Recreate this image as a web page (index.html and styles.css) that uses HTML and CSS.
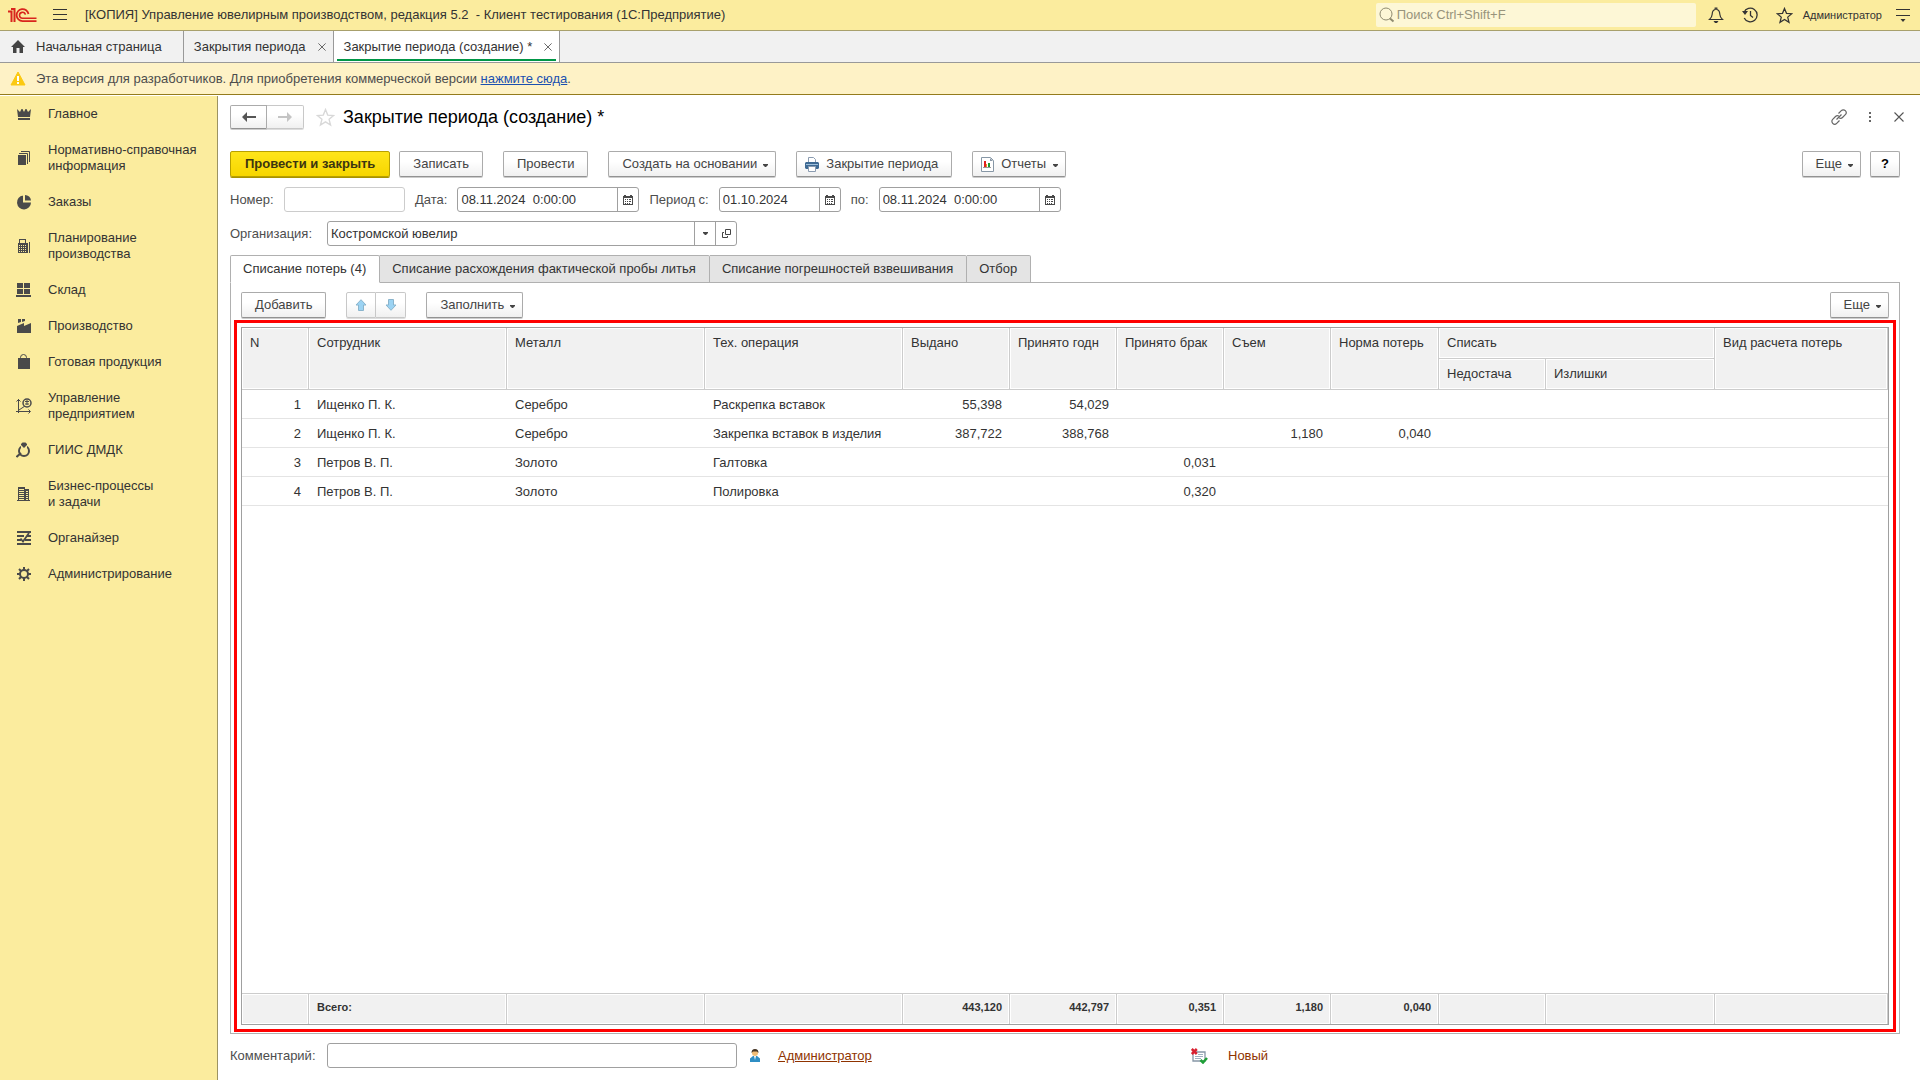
FILE: index.html
```html
<!DOCTYPE html>
<html lang="ru">
<head>
<meta charset="utf-8">
<meta name="viewport" content="width=device-width, initial-scale=1">
<title>Закрытие периода (создание) *</title>
<link rel="stylesheet" href="styles.css">
</head>
<body>
<svg class="defs" aria-hidden="true">
  <symbol id="calendar" viewBox="0 0 10 10"><path fill="#4a4a4a" d="M0 1h1V0h2v1h4V0h2v1h1v9H0z"/><path fill="#fff" d="M1 3h8v6H1z"/><path fill="#4a4a4a" d="M2 4h1v1H2zM4 4h1v1H4zM6 4h2v1H6zM2 6h1v1H2zM4 6h1v1H4zM6 6h2v1H6zM2 8h1v1H2zM4 8h1v1H4zM6 8h1v1H6z"/></symbol>
  <symbol id="caret" viewBox="0 0 5 3"><path fill="#444" d="M0 0h5v1L3 3H2L0 1z"/></symbol>
  <symbol id="star" viewBox="0 0 18 18"><path fill="none" stroke="currentColor" stroke-width="1.3" d="M9 1.500l2.100 5.200 5.600.4-4.300 3.600 1.400 5.500L9 13.200l-4.800 3 1.400-5.500L1.300 7.100l5.600-.4z"/></symbol>
  <symbol id="cross" viewBox="0 0 10 10"><path fill="none" stroke="currentColor" stroke-width="1.1" d="M.5.5l9 9M9.500.5l-9 9"/></symbol>
</svg>

<header class="topbar">
  <svg class="logo" width="30" height="15" viewBox="0 0 30 15" fill="none" stroke="#d9251d"><path stroke-width="2" d="M1 3.500h3.500V14M4 1h3.500v13"/><path stroke-width="1.800" d="M21.500 6a6 6 0 1 0-6 7.100H29.500"/><path stroke-width="1.600" d="M18.400 6.600a3 3 0 1 0-2.900 3.700H29.500"/></svg>
  <button class="icon-btn menu" aria-label="Меню"><svg width="14" height="12" viewBox="0 0 14 12"><path stroke="#333" d="M0 .5h14M0 5.500h14M0 10.500h14"/></svg></button>
  <span class="app-title">[КОПИЯ] Управление ювелирным производством, редакция 5.2 &nbsp;- Клиент тестирования (1С:Предприятие)</span>
  <label class="search"><svg width="16" height="16" viewBox="0 0 16 16" fill="none" stroke="#8f8b70"><circle cx="7" cy="7" r="6"/><path stroke-width="2" d="M11 11.500l3.500 3"/></svg><input type="search" placeholder="Поиск Ctrl+Shift+F" aria-label="Поиск"></label>
  <div class="top-actions">
    <button class="icon-btn" aria-label="Уведомления"><svg width="16" height="16" viewBox="0 0 16 16"><path fill="none" stroke="#333" stroke-width="1.200" d="M1.500 12.500h13c-2.500-2-2.500-3-2.700-5.500C11.600 4 10.500 2.800 8.800 2.500V1H7.200v1.500C5.500 2.800 4.400 4 4.200 7 4 9.500 4 10.500 1.500 12.500z"/><path fill="#333" d="M5.500 14h5L9 16H7z"/></svg></button>
    <button class="icon-btn" aria-label="История"><svg width="16" height="16" viewBox="0 0 16 16" fill="none" stroke="#333" stroke-width="1.300"><path d="M2 5.500a6.800 6.800 0 1 1 .2 5.500M8.500 4v4.500l2.500 2"/><path fill="#333" stroke="none" d="M0 4h6L3 8z"/></svg></button>
    <button class="icon-btn dark" aria-label="Избранное"><svg width="17" height="17"><use href="#star"/></svg></button>
    <a class="user" href="#user">Администратор</a>
    <button class="icon-btn" aria-label="Сервис"><svg width="14" height="13" viewBox="0 0 14 13"><path stroke="#333" d="M0 .5h14M0 6.500h14"/><path fill="#333" d="M4.500 10h5L7 13z"/></svg></button>
  </div>
</header>

<nav class="window-tabs" aria-label="Открытые окна">
  <a class="window-tab home" href="#home"><svg width="16" height="13" viewBox="0 0 16 13"><path fill="#444" d="M8 0l7 7h-2v6H9.500V8h-3v5H3V7H1z"/></svg>Начальная страница</a>
  <span class="window-tab"><a href="#list">Закрытия периода</a><button class="icon-btn" aria-label="Закрыть"><svg width="8" height="8"><use href="#cross"/></svg></button></span>
  <span class="window-tab current"><a href="#new">Закрытие периода (создание) *</a><button class="icon-btn" aria-label="Закрыть"><svg width="8" height="8"><use href="#cross"/></svg></button></span>
</nav>

<div class="banner">
  <svg width="16" height="15" viewBox="0 0 16 15"><path fill="#fbc912" stroke="#fbc912" stroke-linejoin="round" d="M8 1l7 13H1z"/><path fill="#fff" d="M7 5h2v5H7zM7 11h2v2H7z"/></svg>
  <span>Эта версия для разработчиков. Для приобретения коммерческой версии <a href="#buy">нажмите сюда</a>.</span>
</div>

<div class="workspace">
  <nav class="sidebar" aria-label="Разделы">
    <a href="#main"><svg width="16" height="16" viewBox="0 0 16 16"><path fill="#4a4a4a" d="M1 3l3 3 1.500-3h1L8 6l1.500-3h1L12 6l3-3-1 8H2zM2 12h12v2H2z"/></svg>Главное</a>
    <a href="#ref"><svg width="16" height="16" viewBox="0 0 16 16"><path fill="#4a4a4a" d="M2 5h8v10H2z"/><path fill="none" stroke="#4a4a4a" d="M3 3.500h8.500V14M5 1.500h8.500V12"/></svg>Нормативно-справочная<br>информация</a>
    <a href="#orders"><svg width="16" height="16" viewBox="0 0 16 16"><path fill="#4a4a4a" d="M7 1v7.500h8A7 7 0 1 1 7 1.500zM9 1a6 6 0 0 1 6 5.500H9z"/></svg>Заказы</a>
    <a href="#plan"><svg width="16" height="16" viewBox="0 0 16 16"><path fill="#4a4a4a" d="M3 1h7v4h2v10H2V5h1zM13 4h1v11h-1z"/><path fill="#fbec9e" d="M4 2h5v3H4zM3 7h1v1H3zM5 7h1v1H5zM7 7h1v1H7zM9 7h1v1H9zM3 9h1v1H3zM5 9h1v1H5zM7 9h1v1H7zM9 9h1v1H9zM3 11h1v1H3zM5 11h1v1H5zM7 11h1v1H7zM9 11h1v1H9zM3 13h1v1H3zM5 13h1v1H5zM7 13h1v1H7zM9 13h1v1H9z"/></svg>Планирование<br>производства</a>
    <a href="#stock"><svg width="16" height="16" viewBox="0 0 16 16"><path fill="#4a4a4a" d="M1 1h6v5H1zM8 1h6v5H8zM1 7h6v5H1zM8 7h6v5H8zM0 13h15v2H0z"/></svg>Склад</a>
    <a href="#production"><svg width="16" height="16" viewBox="0 0 16 16"><path fill="#4a4a4a" d="M2 1h3v3L2 5zM6 1h3v2L6 4zM1 8l7-3v3l7-3v10H1z"/></svg>Производство</a>
    <a href="#goods"><svg width="16" height="16" viewBox="0 0 16 16"><path fill="#4a4a4a" d="M2 4h2v2h1V4h5v2h1V4h3v11H2z"/><path fill="none" stroke="#4a4a4a" d="M4.500 6V3.500q0-3 3-3t3 3V6"/></svg>Готовая продукция</a>
    <a href="#company"><svg width="16" height="16" viewBox="0 0 16 16" fill="none" stroke="#4a4a4a"><path d="M2.500 1v14M0 13.500h14M3 12l6-4M.5 3.500l2-2 2 2M12.500 11.500l2 2-2 2"/><circle cx="11" cy="5" r="4" stroke-width="1.500"/><path d="M9 3.500h4M9 6h4M11 2v5"/></svg>Управление<br>предприятием</a>
    <a href="#giis"><svg width="16" height="16" viewBox="0 0 16 16"><circle cx="8" cy="9" r="5" fill="none" stroke="#4a4a4a" stroke-width="2"/><path stroke="#4a4a4a" stroke-width="2" d="M5 11l-4.500 4"/><path fill="#fbec9e" d="M5 2h6v4L8 8 5 6z"/><path fill="#4a4a4a" d="M5 2l1.500-1.500h3L11 2v1L8 6 5 3z"/></svg>ГИИС ДМДК</a>
    <a href="#tasks"><svg width="16" height="16" viewBox="0 0 16 16"><path fill="#4a4a4a" d="M2 1h7v2h4v11h1v1H1v-1h1z"/><path stroke="#fbec9e" d="M3 3.500h5M3 5.500h5M3 7.500h5M3 9.500h5M3 11.500h5M3 13.500h5M10 5.500h2M10 7.500h2M10 9.500h2M10 11.500h2M10 13.500h2"/></svg>Бизнес-процессы<br>и задачи</a>
    <a href="#organizer"><svg width="16" height="16" viewBox="0 0 16 16" fill="none" stroke="#4a4a4a" stroke-width="2"><path d="M1 2h14M1 6h7M11 6h4M1 10h4M9 10h6M1 14h14"/><path stroke-width="1.800" d="M4.500 8.500L7 11.500 13 3"/></svg>Органайзер</a>
    <a href="#admin"><svg width="16" height="16" viewBox="0 0 16 16" fill="none" stroke="#4a4a4a" stroke-width="2"><circle cx="8" cy="8" r="4"/><path d="M8 1v3M8 12v3M1 8h3M12 8h3M3 3l2 2M11 11l2 2M13 3l-2 2M3 13l2-2"/></svg>Администрирование</a>
  </nav>

  <main class="form">
    <div class="form-head">
      <div class="btn-pair">
        <button class="btn" aria-label="Назад"><svg width="14" height="10" viewBox="0 0 14 10"><path fill="#555" d="M5 0v4h9v2H5v4L0 5z"/></svg></button>
        <button class="btn faded" aria-label="Вперед" disabled><svg width="14" height="10" viewBox="0 0 14 10"><path fill="#c4c4c4" d="M9 0v4H0v2h9v4l5-5z"/></svg></button>
      </div>
      <button class="icon-btn fav" aria-label="В избранное"><svg width="19" height="19"><use href="#star"/></svg></button>
      <h1>Закрытие периода (создание) *</h1>
      <div class="head-tools">
        <button class="icon-btn" aria-label="Ссылка"><svg width="16" height="16" viewBox="0 0 16 16" fill="none" stroke="#666" stroke-width="1.200"><path d="M7.500 4.500l2.800-2.800a2.700 2.700 0 0 1 4 4L11.500 8.500q-1.500 1.500-3.300.5M8.500 11.500l-2.800 2.800a2.700 2.700 0 0 1-4-4L4.500 7.500q1.500-1.500 3.300-.5M5.500 10.500l5-5"/></svg></button>
        <button class="icon-btn" aria-label="Еще"><svg width="3" height="11" viewBox="0 0 3 11"><path fill="#666" d="M0 0h2v2H0zM0 4h2v2H0zM0 8h2v2H0z"/></svg></button>
        <button class="icon-btn" aria-label="Закрыть"><svg width="10" height="10"><use href="#cross"/></svg></button>
      </div>
    </div>

    <div class="commands">
      <div class="cmd-group">
        <button class="btn primary">Провести и закрыть</button>
        <button class="btn">Записать</button>
      </div>
      <button class="btn">Провести</button>
      <button class="btn drop">Создать на основании<svg width="5" height="5" viewBox="0 -2 5 5"><use href="#caret" width="5" height="3"/></svg></button>
      <button class="btn with-icon"><svg width="14" height="15" viewBox="0 0 14 15"><path fill="#fff" stroke="#8a9bb0" d="M3.500 5V.500h5l2 2V5"/><path fill="#3f6a94" d="M1 5h12l1 1v5l-1 1H1l-1-1V6z"/><path fill="#9fc0dc" d="M1 7h12v1H1z"/><path fill="#fff" stroke="#8a9bb0" d="M3.500 9.500h7v5h-7z"/></svg>Закрытие периода</button>
      <button class="btn with-icon drop"><svg width="13" height="15" viewBox="0 0 13 15"><path fill="#fff" stroke="#8797a6" d="M.5.500h9l3 3v11H.500z"/><path fill="#8797a6" d="M9 1v3h3z"/><path fill="#e02020" d="M3 4h2v6H3z"/><path fill="#e0a020" d="M5 7h1v3H5z"/><path fill="#1a9a30" d="M7 6h2v4H7z"/><path fill="#999" d="M2 10h8v1H2z"/></svg>Отчеты<svg width="5" height="5" viewBox="0 -2 5 5"><use href="#caret" width="5" height="3"/></svg></button>
      <div class="cmd-group right">
        <button class="btn drop">Еще<svg width="5" height="5" viewBox="0 -2 5 5"><use href="#caret" width="5" height="3"/></svg></button>
        <button class="btn help">?</button>
      </div>
    </div>

    <div class="fields">
      <label for="number" class="col-label short">Номер:</label>
      <div class="field number"><input id="number" type="text"></div>
      <label for="date">Дата:</label>
      <div class="field datetime"><input id="date" type="text" value="08.11.2024  0:00:00"><button aria-label="Выбрать дату"><svg width="10" height="10"><use href="#calendar"/></svg></button></div>
      <label for="from">Период с:</label>
      <div class="field date"><input id="from" type="text" value="01.10.2024"><button aria-label="Выбрать начало периода"><svg width="10" height="10"><use href="#calendar"/></svg></button></div>
      <label for="to">по:</label>
      <div class="field datetime"><input id="to" type="text" value="08.11.2024  0:00:00"><button aria-label="Выбрать конец периода"><svg width="10" height="10"><use href="#calendar"/></svg></button></div>
    </div>

    <div class="fields">
      <label for="org" class="col-label">Организация:</label>
      <div class="field wide">
        <select id="org"><option>Костромской ювелир</option></select>
        <button aria-label="Выбрать из списка"><svg width="5" height="3"><use href="#caret"/></svg></button>
        <button aria-label="Открыть"><svg width="9" height="9" viewBox="0 0 9 9" fill="none" stroke="#444"><path d="M3.500.500h5v5h-5zM2 3.500H.500v5h5V7"/></svg></button>
      </div>
    </div>

    <div class="tabs" role="tablist">
      <button role="tab" aria-selected="true">Списание потерь (4)</button>
      <button role="tab">Списание расхождения фактической пробы литья</button>
      <button role="tab">Списание погрешностей взвешивания</button>
      <button role="tab">Отбор</button>
    </div>

    <section class="panel">
      <div class="panel-tools">
        <button class="btn">Добавить</button>
        <div class="btn-pair small">
          <button class="btn faded" aria-label="Вверх"><svg width="12" height="12" viewBox="0 0 12 12"><path fill="#9bd3f3" stroke="#8ab4cc" d="M6 .7L11 6H8.500v5.500h-5V6H1z"/></svg></button>
          <button class="btn faded" aria-label="Вниз"><svg width="12" height="12" viewBox="0 0 12 12"><path fill="#9bd3f3" stroke="#8ab4cc" d="M6 11.300L11 6H8.500V.500h-5V6H1z"/></svg></button>
        </div>
        <button class="btn drop">Заполнить<svg width="5" height="5" viewBox="0 -2 5 5"><use href="#caret" width="5" height="3"/></svg></button>
        <button class="btn drop right">Еще<svg width="5" height="5" viewBox="0 -2 5 5"><use href="#caret" width="5" height="3"/></svg></button>
      </div>
      <div class="highlight">
        <table class="grid">
          <colgroup><col class="c-n"><col class="c-text"><col class="c-text"><col class="c-text"><col class="c-num"><col class="c-num"><col class="c-num"><col class="c-num"><col class="c-norm"><col class="c-num"><col class="c-over"><col></colgroup>
          <thead>
            <tr><th rowspan="2">N</th><th rowspan="2">Сотрудник</th><th rowspan="2">Металл</th><th rowspan="2">Тех. операция</th><th rowspan="2">Выдано</th><th rowspan="2">Принято годн</th><th rowspan="2">Принято брак</th><th rowspan="2">Съем</th><th rowspan="2">Норма потерь</th><th colspan="2">Списать</th><th rowspan="2">Вид расчета потерь</th></tr>
            <tr><th>Недостача</th><th>Излишки</th></tr>
          </thead>
          <tbody>
            <tr><td class="num">1</td><td>Ищенко П. К.</td><td>Серебро</td><td>Раскрепка вставок</td><td class="num">55,398</td><td class="num">54,029</td><td></td><td></td><td></td><td></td><td></td><td></td></tr>
            <tr><td class="num">2</td><td>Ищенко П. К.</td><td>Серебро</td><td>Закрепка вставок в изделия</td><td class="num">387,722</td><td class="num">388,768</td><td></td><td class="num">1,180</td><td class="num">0,040</td><td></td><td></td><td></td></tr>
            <tr><td class="num">3</td><td>Петров В. П.</td><td>Золото</td><td>Галтовка</td><td></td><td></td><td class="num">0,031</td><td></td><td></td><td></td><td></td><td></td></tr>
            <tr><td class="num">4</td><td>Петров В. П.</td><td>Золото</td><td>Полировка</td><td></td><td></td><td class="num">0,320</td><td></td><td></td><td></td><td></td><td></td></tr>
            <tr class="filler"><td colspan="12"></td></tr>
          </tbody>
          <tfoot>
            <tr><td></td><td>Всего:</td><td></td><td></td><td class="num">443,120</td><td class="num">442,797</td><td class="num">0,351</td><td class="num">1,180</td><td class="num">0,040</td><td></td><td></td><td></td></tr>
          </tfoot>
        </table>
      </div>
    </section>

    <footer class="form-foot">
      <label for="comment" class="col-label">Комментарий:</label>
      <div class="field wide"><input id="comment" type="text"></div>
      <div class="author"><svg width="10" height="13" viewBox="0 0 10 13"><path fill="#2f8ec4" d="M0 13V9.500L3 7h4l3 2.500V13z"/><path fill="#fff" d="M4 7h2l-1 4z"/><circle cx="5" cy="4" r="3" fill="#f1bd76"/><path fill="#443322" d="M1.500 4q0-4 3.500-4t3.500 4L7 2.500H3z"/></svg><a href="#author">Администратор</a></div>
      <div class="state"><svg width="17" height="16" viewBox="0 0 17 16"><path fill="#fff" stroke="#8797a6" stroke-width="1.300" d="M3 4h11v9H2V6"/><path stroke="#9fb0c0" d="M7 6.500h5M4 8.500h8M4 10.500h6"/><path stroke="#d82030" stroke-width="2.500" d="M.8 1l5 5M5.800 1l-5 5"/><path fill="none" stroke="#1fa038" stroke-width="2.500" d="M9.500 12l2.500 2.500L16 10"/></svg><span>Новый</span></div>
    </footer>
  </main>
</div>
</body>
</html>
```
FILE: styles.css
```css
* { box-sizing: border-box; }

body {
  margin: 0;
  min-height: 100vh;
  display: flex;
  flex-direction: column;
  background: #fff;
  color: #333;
  font: 13px/16px "Liberation Sans", Arial, sans-serif;
}

button, input, select { font: inherit; color: inherit; }
svg { flex: none; }
.defs { display: none; }

.icon-btn {
  display: flex;
  padding: 0;
  border: 0;
  background: none;
  color: #555;
}
.icon-btn.dark { color: #333; }

/* Application header */
.topbar {
  display: flex;
  align-items: center;
  height: 31px;
  padding: 0 10px 0 7px;
  background: #fbec9e;
  border-bottom: 1px solid #a8a06c;
}
.menu { margin: 0 18px 0 16px; }
.app-title { flex: 1; white-space: nowrap; }
.search {
  display: flex;
  align-items: center;
  gap: 2px;
  width: 320px;
  height: 24px;
  margin-right: 12px;
  padding-left: 3px;
  background: #fdf7d6;
  border-radius: 2px;
}
.search input {
  flex: 1;
  min-width: 0;
  padding: 0;
  border: 0;
  outline: 0;
  background: none;
}
.search input::placeholder { color: #98947c; opacity: 1; }
.top-actions { display: flex; align-items: center; gap: 18px; }
.user {
  margin: 0 -4px 0 -8px;
  color: #333;
  font-size: 11px;
  text-decoration: none;
}

/* Open window tabs */
.window-tabs {
  display: flex;
  height: 32px;
  background: #f1f1f1;
  border-bottom: 1px solid #999;
}
.window-tab {
  display: flex;
  align-items: center;
  gap: 12px;
  padding: 0 7px 0 10px;
  border-right: 1px solid #999;
  color: #333;
}
.window-tab a { color: inherit; text-decoration: none; }
.window-tab.home { gap: 10px; padding-right: 21px; text-decoration: none; }
.window-tab.current {
  background: linear-gradient(#009646, #009646) center bottom 1px / calc(100% - 6px) 2px no-repeat #fff;
}

.banner {
  display: flex;
  align-items: center;
  gap: 10px;
  height: 32px;
  padding-left: 10px;
  background: #fef2c6;
  border-bottom: 1px solid #947b1c;
  color: #4d4d4d;
}
.banner a { color: #1a50b0; }

.workspace { flex: 1; display: flex; padding-top: 1px; }

/* Section navigation */
.sidebar {
  display: flex;
  flex-direction: column;
  gap: 20px;
  width: 218px;
  padding: 10px 0 10px 16px;
  background: #fbec9e;
  border-right: 1px solid #9c9362;
}
.sidebar a {
  display: flex;
  gap: 16px;
  align-items: center;
  color: #333;
  text-decoration: none;
}

/* Document form */
.form {
  flex: 1;
  min-width: 0;
  display: flex;
  flex-direction: column;
  padding: 9px 20px 12px 12px;
  color: #4d4d4d;
}

.btn {
  display: flex;
  align-items: center;
  justify-content: center;
  height: 26px;
  padding: 0 13px;
  border: 1px solid #ababab;
  border-bottom-color: #929292;
  border-radius: 2px;
  background: linear-gradient(#fff 40%, #f0f0f0);
  box-shadow: 0 1px 0 #ccc;
  color: #444;
  white-space: nowrap;
}
.btn.primary {
  padding: 0 14px;
  border-color: #b8a000;
  background: linear-gradient(#ffe51a, #f7d600);
  box-shadow: 0 1px 0 #a89200;
  color: #3c3510;
  font-weight: bold;
}
.btn.drop { gap: 6px; padding-right: 7px; }
.btn.with-icon { gap: 7px; padding-left: 8px; }
.btn.help { width: 30px; padding: 0; color: #000; font-weight: bold; }
.right { margin-left: auto; }

.btn-pair { display: flex; }
.btn-pair .btn { width: 37px; height: 24px; padding: 0; border-radius: 2px 0 0 2px; }
.btn-pair .btn + .btn { border-left: 0; border-radius: 0 2px 2px 0; }
.btn-pair .btn.faded { border-color: #c8c8c8; box-shadow: 0 1px 0 #ddd; }
.btn-pair.small .btn { width: 30px; height: 26px; }

.form-head { display: flex; align-items: center; margin-bottom: 22px; }
.fav { margin: 0 8px 0 12px; color: #d8d8d8; }
h1 { margin: 0; color: #000; font-size: 18px; font-weight: normal; line-height: 20px; }
.head-tools { display: flex; align-items: center; gap: 22px; margin: 0 -4px 0 auto; }

.commands { display: flex; gap: 20px; margin-bottom: 10px; }
.cmd-group { display: flex; gap: 9px; }

.fields { display: flex; align-items: center; margin-bottom: 9px; }
.fields label { margin: 0 10px; white-space: nowrap; }
.fields .col-label, .col-label { width: 97px; margin: 0; white-space: nowrap; }
.fields .col-label.short { width: 54px; }

.field {
  display: flex;
  height: 25px;
  border: 1px solid #a0a0a0;
  border-radius: 3px;
  background: #fff;
  color: #333;
}
.field input, .field select {
  flex: 1;
  min-width: 0;
  padding: 0 3px;
  border: 0;
  outline: 0;
  background: none;
  appearance: none;
}
.field button {
  display: flex;
  align-items: center;
  justify-content: center;
  width: 21px;
  padding: 0;
  border: 0;
  border-left: 1px solid #a0a0a0;
  background: none;
}
.field.number { width: 121px; border-color: #ccc; }
.field.datetime { width: 182px; }
.field.date { width: 122px; }
.field.wide { width: 410px; }

.tabs { display: flex; position: relative; z-index: 1; margin-bottom: -1px; }
.tabs button {
  height: 28px;
  padding: 0 13px 0 12px;
  border: 1px solid #b0b0b0;
  border-left-width: 0;
  border-radius: 0 2px 0 0;
  background: #e4e4e4;
  color: #333;
}
.tabs button:first-child { border-left-width: 1px; border-radius: 2px 2px 0 0; }
.tabs [aria-selected="true"] { background: #fff; border-bottom-color: #fff; }

.panel {
  flex: 1;
  display: flex;
  flex-direction: column;
  padding: 9px 3px 1px;
  border: 1px solid #b0b0b0;
}
.panel-tools { display: flex; gap: 20px; padding: 0 7px; margin-bottom: 2px; }
.highlight { flex: 1; display: grid; padding: 4px; border: 3px solid #f00; }

/* Losses table */
.grid {
  width: 100%;
  height: 100%;
  table-layout: fixed;
  border: 1px solid #a0a0a0;
  border-spacing: 0;
  color: #333;
}
.c-n { width: 67px; }
.c-text { width: 198px; }
.c-num { width: 107px; }
.c-norm { width: 108px; }
.c-over { width: 169px; }
.grid th, .grid td {
  height: 29px;
  padding: 0 8px;
  overflow: hidden;
  text-align: left;
  font-weight: normal;
  white-space: nowrap;
}
.grid td { padding-top: 1px; border-bottom: 1px solid #e4e4e4; }
.grid td.num { text-align: right; }
.grid th {
  height: 31px;
  padding-top: 7px;
  border-right: 1px solid #ccc;
  border-bottom: 1px solid #ccc;
  background: #f1f1f1;
  box-shadow: inset 0 0 0 1px #fff;
  vertical-align: top;
}
.grid .filler { height: 100%; }
.grid .filler td { height: auto; border: 0; }
.grid tfoot td {
  height: 31px;
  padding-top: 0;
  padding-bottom: 4px;
  border-top: 1px solid #ccc;
  border-right: 1px solid #ccc;
  border-bottom: 0;
  background: #f1f1f1;
  box-shadow: inset 0 0 0 1px #fff;
  font-size: 11px;
  font-weight: bold;
}
.grid tfoot td.num { padding-right: 7px; }

.form-foot { display: flex; align-items: center; margin-top: 9px; }
.author, .state { display: flex; align-items: center; color: #8f3300; }
.author { gap: 18px; margin-left: 13px; width: 441px; }
.author a { color: inherit; }
.state { gap: 20px; }
```
